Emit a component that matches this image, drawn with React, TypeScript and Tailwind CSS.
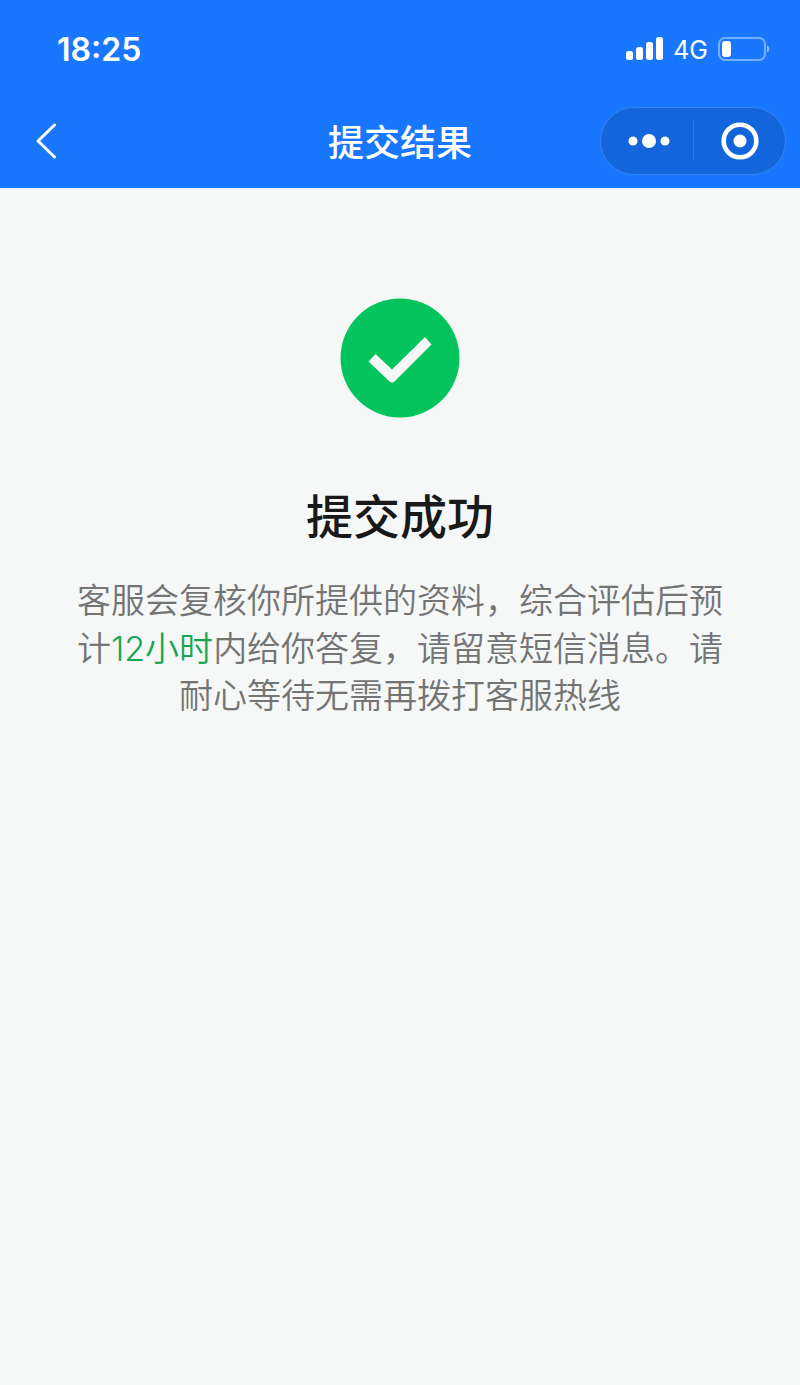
import React from "react";

const SignalIcon: React.FC = () => (
  <svg width="37" height="24" viewBox="0 0 37 24" fill="currentColor" aria-hidden="true">
    <rect x="0" y="14" width="7" height="9" rx="2.500" />
    <rect x="10" y="10" width="7" height="13" rx="2.500" />
    <rect x="20" y="5" width="7" height="18" rx="2.500" />
    <rect x="30" y="0" width="7" height="23" rx="2.500" />
  </svg>
);

const BatteryIcon: React.FC = () => (
  <svg width="52" height="24" viewBox="0 0 52 24" fill="none" aria-hidden="true">
    <rect x="1" y="1" width="46" height="22" rx="6" stroke="#fff" strokeOpacity="0.4" strokeWidth="2" />
    <rect x="4" y="4" width="9" height="16" rx="3" fill="#fff" />
    <path d="M49 8.500c3 1 3 6 0 7z" fill="#fff" fillOpacity="0.5" />
  </svg>
);

const BackIcon: React.FC = () => (
  <svg width="20" height="36" viewBox="0 0 20 36" fill="none" aria-hidden="true">
    <path
      d="M18.500 2L2 18l16.500 16"
      stroke="currentColor"
      strokeWidth="3"
      strokeLinecap="round"
      strokeLinejoin="round"
    />
  </svg>
);

const MoreIcon: React.FC = () => (
  <svg width="42" height="16" viewBox="0 0 42 16" fill="currentColor" aria-hidden="true">
    <circle cx="5" cy="8" r="4.500" />
    <circle cx="21" cy="8" r="7" />
    <circle cx="37" cy="8" r="4.500" />
  </svg>
);

const TargetIcon: React.FC = () => (
  <svg width="38" height="38" viewBox="0 0 38 38" fill="none" aria-hidden="true">
    <circle cx="19" cy="19" r="16.300" stroke="currentColor" strokeWidth="4.600" />
    <circle cx="19" cy="19" r="6.500" fill="currentColor" />
  </svg>
);

const SuccessIcon: React.FC = () => (
  <svg width="120" height="120" viewBox="0 0 120 120" fill="none" aria-hidden="true">
    <circle cx="60" cy="60" r="59.500" fill="#03c45d" />
    <path
      d="M28.500 63.500L35.500 56L52 71.500L85 39L91.500 46.500L55 83Q52 86 49 83Z"
      fill="#f5f8f7"
    />
  </svg>
);

const StatusBar: React.FC = () => (
  <div className="flex h-[94px] items-center justify-between pt-1 pr-[30px] pl-[57px]">
    <span className="pt-0.5 font-['Inter',sans-serif] text-[32px] leading-10 font-semibold">18:25</span>
    <div className="flex items-center gap-[10px]">
      <SignalIcon />
      <span className="pt-0.5 font-['Inter',sans-serif] text-[25px] leading-8">4G</span>
      <BatteryIcon />
    </div>
  </div>
);

const NavBar: React.FC = () => (
  <nav className="grid h-[94px] grid-cols-[1fr_auto_1fr] items-center px-[14px]">
    <button type="button" aria-label="返回" className="flex h-16 w-16 items-center justify-center">
      <BackIcon />
    </button>
    <h1 className="pt-1.5 text-[36px] leading-[48px] font-medium">提交结果</h1>
    <div className="flex h-[68px] w-[186px] items-center justify-self-end rounded-full border border-[#3584ee] bg-[#1265db]">
      <button type="button" aria-label="更多" className="flex h-full w-[92px] items-center justify-center pl-1">
        <MoreIcon />
      </button>
      <span className="h-10 w-px bg-[#3079e2]" />
      <button type="button" aria-label="关闭" className="flex h-full flex-1 items-center justify-center">
        <TargetIcon />
      </button>
    </div>
  </nav>
);

export default function App() {
  return (
    <div className="min-h-screen bg-[#f5f8f7] font-['Liberation_Sans','Noto_Sans_CJK_SC',sans-serif]" lang="zh-CN">
      <header className="bg-[#1977ff] text-white">
        <StatusBar />
        <NavBar />
      </header>

      <main className="flex flex-col items-center px-[74px] pt-[110px] text-center">
        <SuccessIcon />
        <h2 className="mt-[66px] text-[47px] leading-[68px] font-medium text-[#191919]">提交成功</h2>
        <p className="mt-[26px] text-[34px] leading-[47px] font-[350] text-[#747474]">
          客服会复核你所提供的资料，综合评估后预计
          <span className="font-['Inter','Noto_Sans_CJK_SC',sans-serif] text-[#16a651]">12小时</span>
          内给你答复，请留意短信消息。请耐心等待无需再拨打客服热线
        </p>
      </main>
    </div>
  );
}
